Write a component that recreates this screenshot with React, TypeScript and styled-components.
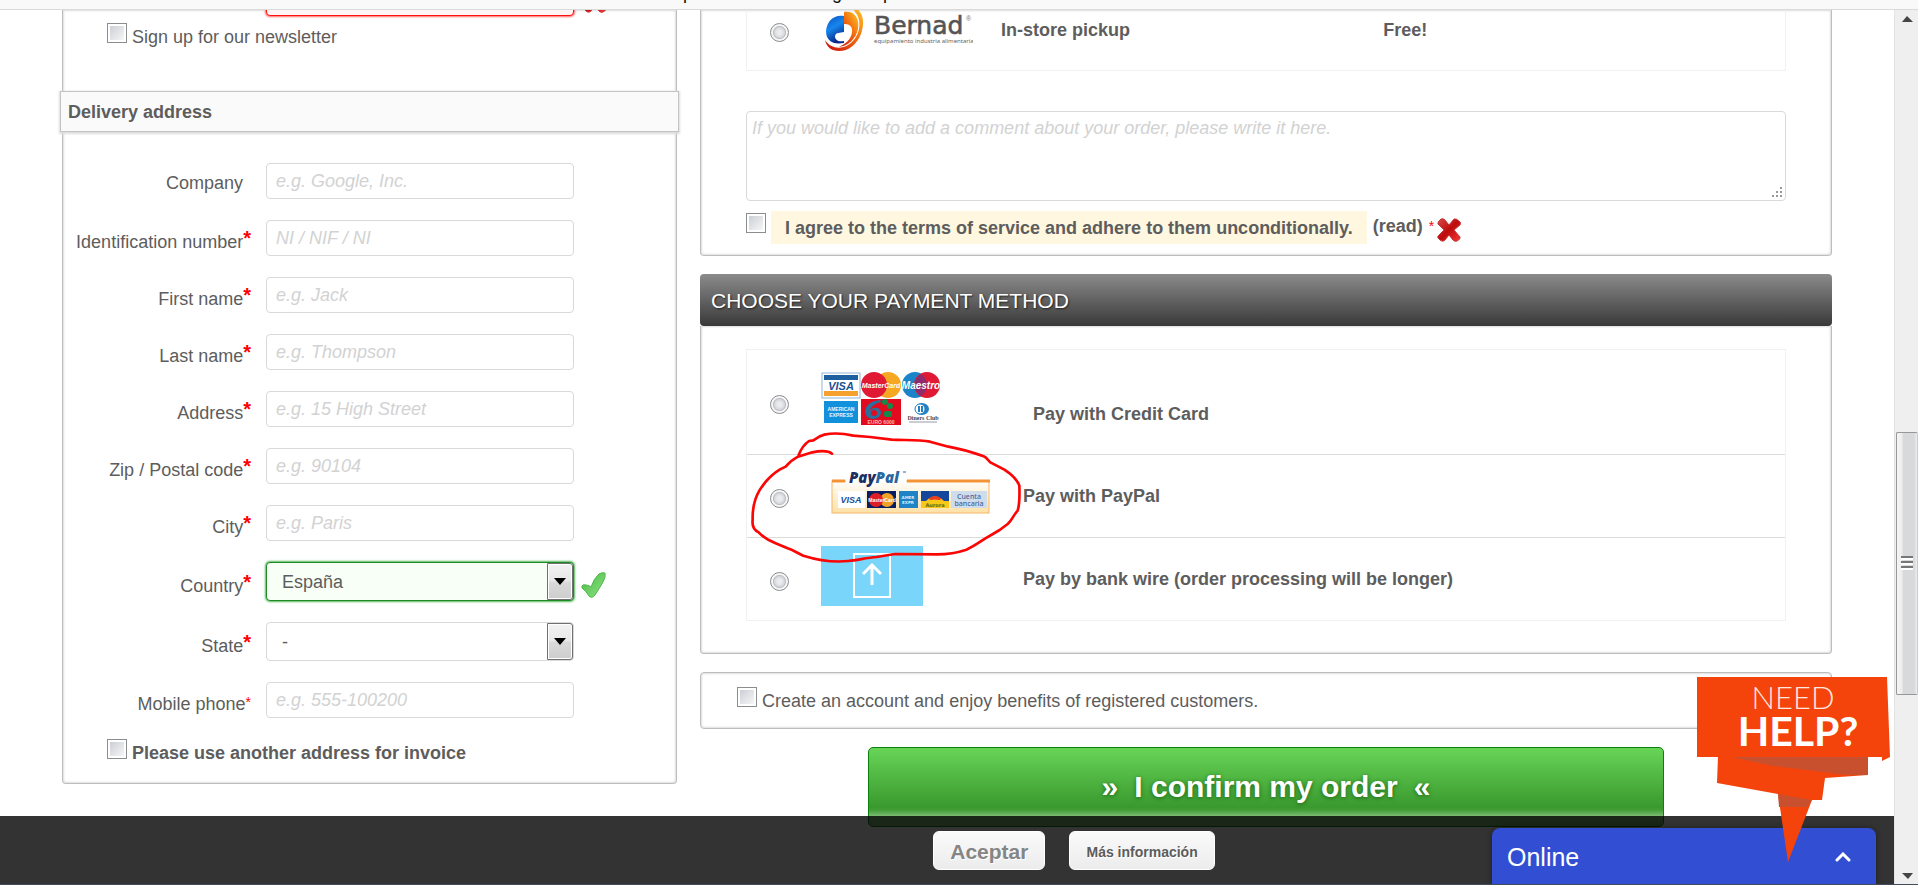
import React, { useState } from "react";
import styled, { createGlobalStyle, css } from "styled-components";

const GlobalStyle = createGlobalStyle`
  *, *::before, *::after { box-sizing: border-box; }
  html, body { margin: 0; padding: 0; }
  body {
    font-family: "Liberation Sans", Arial, sans-serif;
    font-size: 18px;
    line-height: 20px;
    color: #5d5d5d;
    background: #fff;
  }
  button, input, select, textarea { font: inherit; color: inherit; margin: 0; }
`;

const Shell = styled.div`
  height: 100vh;
  display: flex;
  flex-direction: column;
  overflow: hidden;
`;

const TopBar = styled.header`
  flex: 0 0 10px;
  overflow: hidden;
  display: flex;
  background: #f9f9f9;
  border-bottom: 1px solid #dadada;
  color: #111;
  line-height: 10px;
  padding-left: 683px;
`;

const Clipped = styled.span<{ $width: number }>`
  flex: 0 0 ${(p) => p.$width}px;
  margin-top: -12px;
`;

const Viewport = styled.div`
  flex: 1;
  min-height: 0;
  display: flex;
  overflow: hidden;
`;

const Page = styled.div`
  flex: 1;
  min-width: 0;
  position: relative;
  overflow: hidden;
`;

const Columns = styled.main`
  display: grid;
  grid-template-columns: 615fr 1132fr;
  column-gap: 23px;
  padding: 0 62px;
  align-items: start;
`;

const panelFrame = css`
  border: 1px solid #bdbdbd;
  border-radius: 4px;
  box-shadow: inset 0 0 2px 1px #dedede;
  background: #fff;
`;

const AddressPanel = styled.section`
  ${panelFrame}
  border-top: 0;
  border-top-left-radius: 0;
  border-top-right-radius: 0;
  padding-bottom: 20px;
`;

const SubHeader = styled.h2`
  margin: 44px -3px 31px;
  height: 41px;
  display: flex;
  align-items: center;
  padding: 0 7px;
  font-size: 18px;
  background: #fafafa;
  border: 1px solid #c4c4c4;
  box-shadow: 0 1px 2px 1px #dcdcdc;
`;

const FieldRow = styled.div`
  display: grid;
  grid-template-columns: 188px 308px auto;
  column-gap: 15px;
  align-items: center;
  margin-bottom: 21px;
`;

const LabelCell = styled.label<{ $required?: boolean }>`
  display: flex;
  justify-content: flex-end;
  white-space: nowrap;
  padding-top: ${(p) => (p.$required ? 8 : 4)}px;
  padding-right: ${(p) => (p.$required ? 0 : 8)}px;
`;

const Star = styled.span<{ $small?: boolean }>`
  color: #f00;
  font-weight: ${(p) => (p.$small ? "normal" : "bold")};
  font-size: ${(p) => (p.$small ? 14 : 20)}px;
  line-height: ${(p) => (p.$small ? 16 : 12)}px;
`;

const inputFrame = css`
  border: 1px solid #d9d9d9;
  border-radius: 4px;
  background: #fff;
  &::placeholder { color: #d2d2d2; font-style: italic; opacity: 1; }
`;

const TextInput = styled.input<{ $state?: "error" }>`
  ${inputFrame}
  width: 308px;
  height: 36px;
  padding: 0 9px;
  ${(p) => p.$state === "error" && css`
    border: 1px solid #f11;
    background: #fff5f5;
    box-shadow: 0 0 2px 1px #f66;
  `}
`;

const SelectWrap = styled.span`
  position: relative;
  display: block;
  height: 39px;
`;

const SelectInput = styled.select<{ $valid?: boolean }>`
  ${inputFrame}
  appearance: none;
  width: 100%;
  height: 100%;
  padding: 0 40px 0 15px;
  ${(p) => p.$valid && css`
    border-color: #1f8a25;
    background: #f7fff7;
    box-shadow: 0 0 2px 1px #58b75c;
  `}
`;

const SelectArrow = styled.span`
  position: absolute;
  top: 1px;
  right: 1px;
  bottom: 1px;
  width: 26px;
  display: flex;
  align-items: center;
  justify-content: center;
  pointer-events: none;
  border: 1px solid #707070;
  border-radius: 0 3px 3px 0;
  box-shadow: inset 0 0 0 1px #fff;
  background: linear-gradient(#f2f2f2, #e8e8e8 48%, #dadada 52%, #cdcdcd);
`;

const Checkbox = styled.input.attrs({ type: "checkbox" })`
  appearance: none;
  flex: none;
  width: 20px;
  height: 20px;
  border: 1px solid #8c8d8d;
  background: linear-gradient(135deg, #cbcfd5, #f6f6f6) content-box #f4f4f4;
  padding: 2px;
`;

const Radio = styled.input.attrs({ type: "radio" })`
  appearance: none;
  flex: none;
  width: 19px;
  height: 19px;
  border: 1px solid #8a8b8c;
  border-radius: 50%;
  background: radial-gradient(circle, #ececee 0 2px, #d6d8dc 5px, #b9bdc3 6px, #f6f6f6 7px);
`;

const CheckRow = styled.div<{ $top: number; $left: number; $bold?: boolean }>`
  display: flex;
  align-items: flex-start;
  gap: 5px;
  padding: ${(p) => p.$top}px 0 0 ${(p) => p.$left}px;
  font-weight: ${(p) => (p.$bold ? "bold" : "normal")};
  label { padding-top: 4px; }
`;

const ErrorRow = styled.div`
  display: flex;
  gap: 9px;
  margin-top: -30px;
  padding-left: 203px;
  align-items: flex-end;
  svg { margin-bottom: 3px; }
`;

const OrderColumn = styled.div`
  display: flex;
  flex-direction: column;
`;

const Panel = styled.section<{ $openTop?: boolean }>`
  ${panelFrame}
  padding: 0 45px;
  ${(p) => p.$openTop && css`
    border-top: 0;
    border-top-left-radius: 0;
    border-top-right-radius: 0;
  `}
`;

const ShippingPanel = styled(Panel)`padding-bottom: 11px;`;

const PaymentPanel = styled(Panel)`padding-top: 23px; padding-bottom: 32px;`;

const AccountPanel = styled(Panel)`
  margin-top: 18px;
  padding: 0 36px;
  height: 57px;
`;

const OptionList = styled.div`
  position: relative;
  border: 1px solid #f1f1f1;
`;

const ShippingList = styled(OptionList)`
  margin-top: -20px;
  border-top: 0;
`;

const Option = styled.div<{ $height: number }>`
  display: grid;
  grid-template-columns: 19px minmax(0, 1fr);
  column-gap: 32px;
  align-items: center;
  height: ${(p) => p.$height}px;
  padding-left: 23px;
  font-weight: bold;
  & + & { border-top: 1px solid #dcdcdc; }
  input { margin-top: 4px; }
`;

const OptionLabel = styled.label<{ $logo: number }>`
  display: grid;
  grid-template-columns: ${(p) => p.$logo}px minmax(0, 39fr) minmax(0, 41fr);
  align-items: center;
  svg { display: block; }
`;

const PaymentLabel = styled(OptionLabel)`
  grid-template-columns: ${(p) => p.$logo}px minmax(0, 1fr);
  svg { margin-bottom: 6px; }
`;

const OffsetText = styled.span`
  padding: 24px 0 0 10px;
`;

const Comment = styled.textarea`
  ${inputFrame}
  display: block;
  width: 100%;
  height: 90px;
  padding: 6px 5px;
  resize: none;
`;

const CommentWrap = styled.div`
  position: relative;
  margin-top: 40px;
  svg { position: absolute; right: 3px; bottom: 3px; }
`;

const TermsRow = styled.div`
  display: flex;
  align-items: flex-start;
  margin-top: 10px;
  font-weight: bold;
  input { margin: 2px 5px 0 0; }
`;

const TermsLabel = styled.label`
  background: #fff7e0;
  padding: 7px 14px 6px;
  margin-right: 6px;
`;

const ReadLink = styled.a`
  color: inherit;
  text-decoration: none;
  padding: 5px 6px 0 0;
`;

const TermsMark = styled.span`
  display: flex;
  align-items: flex-start;
  gap: 3px;
  padding-top: 7px;
  font-weight: normal;
`;

const SectionTitle = styled.h2`
  margin: 18px 0 0;
  height: 52px;
  padding: 2px 11px 0;
  display: flex;
  align-items: center;
  font-size: 21px;
  font-weight: normal;
  color: #fff;
  text-shadow: 1px 1px 2px #222;
  border-radius: 4px;
  background: linear-gradient(#8b8b8b, #393939);
`;

const Annotation = styled.svg`
  position: absolute;
  top: 0;
  left: 0;
  pointer-events: none;
`;

const ConfirmButton = styled.button`
  height: 80px;
  margin: 18px 168px 0;
  display: flex;
  align-items: center;
  justify-content: center;
  gap: 16px;
  border: 1px solid #0a800d;
  border-radius: 5px;
  color: #fff;
  font-size: 30px;
  font-weight: bold;
  text-shadow: 0 1px 4px #1d6417;
  background: linear-gradient(#67d457, #3a992e 76%, #459f3a 80%, #83bd7b 88%);
`;

const CookieBar = styled.div`
  position: absolute;
  left: 0;
  right: 0;
  bottom: 0;
  height: 68px;
  display: flex;
  justify-content: center;
  align-items: flex-start;
  gap: 24px;
  padding: 15px 0 0 254px;
  background: rgba(0, 0, 0, 0.8);
`;

const CookieButton = styled.button<{ $large?: boolean }>`
  height: 39px;
  padding: 2px 16px 0;
  border: 1px solid #fff;
  border-radius: 6px;
  font-weight: bold;
  font-size: ${(p) => (p.$large ? 21 : 14)}px;
  color: ${(p) => (p.$large ? "#858585" : "#5c5c5c")};
  text-shadow: 1px 1px 0 #fff;
  background: linear-gradient(#fafafa, #ececec);
`;

const ChatTab = styled.button`
  position: absolute;
  right: 18px;
  bottom: 0;
  width: 384px;
  height: 56px;
  display: flex;
  align-items: center;
  justify-content: space-between;
  padding: 2px 25px 0 15px;
  border: 0;
  border-radius: 8px 8px 0 0;
  font-size: 25px;
  color: #fff;
  background: #324fd3;
  box-shadow: 0 0 6px rgba(0, 0, 0, 0.4);
`;

const HelpLink = styled.a`
  position: absolute;
  right: 3px;
  bottom: 21px;
  svg { display: block; }
`;

const ScrollTrack = styled.div`
  flex: 0 0 24px;
  display: grid;
  grid-template-rows: 17px 405fr 263fr 172fr 17px;
  justify-items: center;
  align-items: center;
  padding-left: 1px;
  border-left: 1px solid #e3e3e3;
  background: #efefef;
`;

const ScrollThumb = styled.div`
  grid-row: 3;
  width: 100%;
  height: 100%;
  display: flex;
  align-items: center;
  justify-content: center;
  border: 1px solid #979797;
  border-right-color: #ccc;
  border-radius: 2px;
  background: linear-gradient(90deg, #f6f6f6, #ececec 25%, #d8d9db 32%, #d8d9db 85%, #eee);
`;

const ScrollArrow = styled.svg<{ $row: number; $flip?: boolean }>`
  grid-row: ${(p) => p.$row};
  ${(p) => p.$flip && "transform: rotate(180deg);"}
`;

const Taskbar = styled.footer`
  flex: 0 0 1px;
  background: #424c5c;
`;

const CrossIcon = () => (
  <svg width="24" height="24" viewBox="0 0 24 24" aria-hidden="true">
    <defs>
      <linearGradient id="cross" x1="0" y1="0" x2="1" y2="1">
        <stop offset="0" stopColor="#d84a4a" />
        <stop offset="0.5" stopColor="#bd0c0c" />
        <stop offset="1" stopColor="#f53a3a" />
      </linearGradient>
    </defs>
    <path
      d="M4 1 Q6 0 8 2 L12 7 L17 1 Q19 0 23 4 Q24 5 23 7 L17 12 L23 19 Q24 21 20 23 Q18 24 16 22 L12 17 L8 22 Q5 25 1 20 Q0 19 2 17 L7 12 L1 6 Q0 4 4 1Z"
      fill="url(#cross)"
      stroke="#c93434"
      strokeWidth="1"
    />
  </svg>
);

const TickIcon = () => (
  <svg width="25" height="26" viewBox="0 0 25 26" aria-hidden="true">
    <defs>
      <linearGradient id="tick" x1="0" y1="0" x2="1" y2="1">
        <stop offset="0" stopColor="#4bb548" />
        <stop offset="1" stopColor="#8ee681" />
      </linearGradient>
    </defs>
    <path
      d="M1 14 Q2 12 5 13 Q8 13 10 15 Q13 6 18 2 Q21 0 24 1 Q25 5 22 10 Q18 17 14 23 Q11 27 8 24 Q5 19 1 16Z"
      fill="url(#tick)"
      stroke="#4cba49"
      strokeWidth="1"
    />
  </svg>
);

const BernadLogo = () => (
  <svg width="152" height="60" viewBox="0 0 152 60" fontWeight="400" aria-hidden="true">
    <defs>
      <linearGradient id="flame" x1="1" y1="0" x2="0" y2="1">
        <stop offset="0" stopColor="#ffc928" />
        <stop offset="0.45" stopColor="#f26a0d" />
        <stop offset="1" stopColor="#c80b12" />
      </linearGradient>
      <linearGradient id="wave" x1="0" y1="0" x2="0.4" y2="1">
        <stop offset="0" stopColor="#0c4dc0" />
        <stop offset="0.5" stopColor="#1687ee" />
        <stop offset="1" stopColor="#0a2688" />
      </linearGradient>
    </defs>
    <path d="M23 16 C13 14 6 21 5 31 C5 41 12 45 23 43 L23 41 C17 42 14 40 14 36 C15 32 19 33 23 32Z" fill="url(#wave)" />
    <path d="M23 12 C33 10 39 18 37 29 C35 39 27 46 18 47 C27 43 32 36 31 29 C30 25 27 24 23 24Z" fill="url(#flame)" />
    <path d="M31 6 C43 11 44 22 40 34 C35 47 23 54 12 50 C7 48 5 44 4 40 C9 48 19 50 27 45 C39 38 42 20 34 12Z" fill="url(#flame)" />
    <text x="53" y="34" fontFamily="DejaVu Sans, sans-serif" fontSize="25" fill="#555" stroke="#555" strokeWidth="0.6">Bernad</text>
    <text x="145" y="21" fontFamily="Liberation Sans, sans-serif" fontSize="7" fill="#777">®</text>
    <text x="53" y="43" fontFamily="Noto Sans, sans-serif" fontSize="6" fill="#666">equipamiento industria alimentaria</text>
  </svg>
);

const CardsLogo = () => (
  <svg width="120" height="54" viewBox="0 0 120 54" fontFamily="Liberation Sans, sans-serif" fontWeight="bold" fontStyle="italic" textAnchor="middle" aria-hidden="true">
    <rect x="1" y="1" width="38" height="25" fill="#fff" stroke="#8fb3d6" />
    <rect x="3" y="3" width="34" height="5" fill="#1d5f9f" />
    <rect x="3" y="19" width="34" height="5" fill="#f6a02d" />
    <text x="20" y="18" fontSize="11" fill="#1b4f93">VISA</text>
    <circle cx="67" cy="13" r="13" fill="#f7a823" />
    <circle cx="53" cy="13" r="13" fill="#e01a35" />
    <text x="60" y="16" fontSize="7" fill="#fff">MasterCard</text>
    <circle cx="94" cy="13" r="13" fill="#1b84c9" />
    <circle cx="106" cy="13" r="13" fill="#e01a35" />
    <path d="M100 2 a13 13 0 0 1 0 22 a13 13 0 0 1 0 -22" fill="#8c2c6c" />
    <text x="100" y="17" fontSize="10" fill="#fff">Maestro</text>
    <rect x="3" y="29" width="34" height="22" fill="#1190dc" />
    <text x="20" y="39" fontSize="5" fill="#e8f6ff" fontStyle="normal">AMERICAN</text>
    <text x="20" y="45" fontSize="5" fill="#e8f6ff" fontStyle="normal">EXPRESS</text>
    <rect x="40" y="27" width="40" height="26" fill="#e10a1f" />
    <path d="M59 28 C48 29 42 36 45 43 C48 49 59 48 60 41 C60 35 52 34 49 39 C50 34 53 32 60 30Z" fill="#2b6f9d" />
    <circle cx="53" cy="41" r="3" fill="#e10a1f" />
    <circle cx="64" cy="30" r="3" fill="#128a4a" />
    <circle cx="69" cy="34" r="3" fill="#128a4a" />
    <rect x="63" y="39" width="8" height="6" rx="2" fill="#128a4a" />
    <text x="60" y="52" fontSize="5" fill="#ffb8a8" fontStyle="normal">EURO 6000</text>
    <ellipse cx="101" cy="37" rx="7" ry="6" fill="#2380c3" />
    <circle cx="99" cy="37" r="5" fill="#fff" stroke="#2380c3" />
    <path d="M98 34v6M101 34v6" stroke="#2380c3" strokeWidth="2" />
    <text x="102" y="48" fontSize="6" fill="#445" fontFamily="Liberation Serif, serif" fontStyle="normal">Diners Club</text>
    <path d="M88 50h28" stroke="#99a" />
  </svg>
);

const PayPalLogo = () => (
  <svg width="170" height="48" viewBox="0 0 170 48" fontFamily="DejaVu Sans, sans-serif" fontWeight="bold" textAnchor="middle" aria-hidden="true">
    <defs>
      <linearGradient id="cream" x1="0" y1="0" x2="0" y2="1">
        <stop offset="0" stopColor="#fffefb" />
        <stop offset="1" stopColor="#fde0a6" />
      </linearGradient>
    </defs>
    <rect x="11" y="12" width="157" height="32" fill="url(#cream)" stroke="#f3b868" />
    <path d="M11 12h13M86 12h83" stroke="#f39335" strokeWidth="3" />
    <rect x="25" y="9" width="60" height="5" fill="#fff" />
    <text x="28" y="14" fontSize="15" fontFamily="Open Sans, sans-serif" fontStyle="italic" fontWeight="800" fill="#1c2f60" textAnchor="start">
      Pay<tspan fill="#2b679f">Pal</tspan>
    </text>
    <path d="M82 3h3" stroke="#2b679f" />
    <rect x="17" y="22" width="27" height="17" fill="#fff" />
    <text x="30" y="34" fontSize="9" fontStyle="italic" fill="#17509b" fontFamily="Liberation Sans, sans-serif">VISA</text>
    <rect x="46" y="22" width="29" height="17" fill="#0b1e62" />
    <circle cx="66" cy="31" r="7" fill="#f3a428" />
    <circle cx="55" cy="31" r="7" fill="#df1f26" />
    <text x="61" y="33" fontSize="5" fill="#fff" fontFamily="Liberation Sans, sans-serif">MasterCard</text>
    <rect x="78" y="22" width="19" height="17" fill="#1f83c6" />
    <text x="87" y="30" fontSize="4" fill="#d6efff">AMER</text>
    <text x="87" y="35" fontSize="4" fill="#d6efff">EXPR</text>
    <rect x="100" y="22" width="28" height="17" fill="#f8c818" />
    <path d="M100 22h28v10h-5q-9-9-18 0h-5z" fill="#14479b" />
    <path d="M100 33q14-5 28 0l-8-2q-6-5-12 0z" fill="#de3425" />
    <path d="M107 30q7-6 14 0z" fill="#ee3a20" />
    <text x="114" y="38" fontSize="5" fill="#65631c">Aurora</text>
    <rect x="130" y="22" width="36" height="17" fill="#cfdcec" />
    <text x="148" y="30" fontSize="7" fontWeight="500" fill="#44659a" fontFamily="Noto Sans, sans-serif">Cuenta</text>
    <text x="148" y="37" fontSize="7" fontWeight="500" fill="#44659a" fontFamily="Noto Sans, sans-serif">bancaria</text>
  </svg>
);

const BankWireLogo = () => (
  <svg width="102" height="60" viewBox="0 0 102 60" aria-hidden="true">
    <rect width="102" height="60" fill="#7ad5fa" />
    <rect x="33" y="8" width="36" height="43" fill="none" stroke="#fff" strokeWidth="2" />
    <path d="M51 39V20M42 28L51 19L60 28" fill="none" stroke="#fff" strokeWidth="3" />
  </svg>
);

const HelpBadge = () => (
  <svg width="194" height="186" viewBox="0 0 194 186" aria-hidden="true">
    <path d="M0 0H190L193 80L185 84V80H0Z" fill="#f5430c" />
    <path d="M21 79H171V98L128 101L125 123H115L91 185L81 117L20 106Z" fill="#f5430c" />
    <path d="M34 80H171V98L150 98L76 89Z" fill="#c9502e" />
    <path d="M81 117L115 123L110 130H82Z" fill="#c9502e" />
    <text x="96" y="32" textAnchor="middle" fontFamily="Lato, sans-serif" fontWeight="300" fontSize="31" fill="#ffe7df">NEED</text>
    <text x="101" y="69" textAnchor="middle" fontFamily="Lato, sans-serif" fontWeight="bold" fontSize="41" fill="#fff">HELP?</text>
  </svg>
);

type Field = {
  id: string;
  label: string;
  placeholder?: string;
  star?: "bold" | "small";
  options?: string[];
  valid?: boolean;
};

const fields: Field[] = [
  { id: "company", label: "Company", placeholder: "e.g. Google, Inc." },
  { id: "dni", label: "Identification number", placeholder: "NI / NIF / NI", star: "bold" },
  { id: "firstname", label: "First name", placeholder: "e.g. Jack", star: "bold" },
  { id: "lastname", label: "Last name", placeholder: "e.g. Thompson", star: "bold" },
  { id: "address", label: "Address", placeholder: "e.g. 15 High Street", star: "bold" },
  { id: "postcode", label: "Zip / Postal code", placeholder: "e.g. 90104", star: "bold" },
  { id: "city", label: "City", placeholder: "e.g. Paris", star: "bold" },
  { id: "country", label: "Country", options: ["España"], star: "bold", valid: true },
  { id: "state", label: "State", options: ["-"], star: "bold" },
  { id: "phone", label: "Mobile phone", placeholder: "e.g. 555-100200", star: "small" },
];

const Tick = styled.span`
  margin-left: -8px;
  padding-top: 6px;
  height: 32px;
`;

const AddressField = ({ field }: { field: Field }) => (
  <FieldRow>
    <LabelCell htmlFor={field.id} $required={!!field.star}>
      {field.label}
      {field.star && <Star $small={field.star === "small"}>*</Star>}
    </LabelCell>
    {field.options ? (
      <SelectWrap>
        <SelectInput id={field.id} $valid={field.valid}>
          {field.options.map((o) => <option key={o}>{o}</option>)}
        </SelectInput>
        <SelectArrow>
          <svg width="12" height="7" viewBox="0 0 12 7" aria-hidden="true"><path d="M0 0H12L6 7Z" fill="#000" /></svg>
        </SelectArrow>
      </SelectWrap>
    ) : (
      <TextInput id={field.id} type="text" placeholder={field.placeholder} />
    )}
    {field.valid && <Tick><TickIcon /></Tick>}
  </FieldRow>
);

const payments = [
  { id: "card", text: "Pay with Credit Card", logo: <CardsLogo />, height: 104, offset: true },
  { id: "paypal", text: "Pay with PayPal", logo: <PayPalLogo />, height: 83 },
  { id: "wire", text: "Pay by bank wire (order processing will be longer)", logo: <BankWireLogo />, height: 83 },
];

export default function App() {
  const [comment, setComment] = useState("");
  return (
    <Shell>
      <GlobalStyle />
      <TopBar>
        <Clipped $width={149}>p</Clipped>
        <Clipped $width={51}>g</Clipped>
        <Clipped $width={20}>p</Clipped>
      </TopBar>
      <Viewport>
        <Page>
          <Columns>
            <AddressPanel>
              <ErrorRow>
                <TextInput type="email" aria-label="Email" $state="error" />
                <CrossIcon />
              </ErrorRow>
              <CheckRow $top={7} $left={44}>
                <Checkbox id="newsletter" />
                <label htmlFor="newsletter">Sign up for our newsletter</label>
              </CheckRow>
              <SubHeader>Delivery address</SubHeader>
              {fields.map((f) => <AddressField key={f.id} field={f} />)}
              <CheckRow $top={0} $left={44} $bold>
                <Checkbox id="invoice" />
                <label htmlFor="invoice">Please use another address for invoice</label>
              </CheckRow>
            </AddressPanel>

            <OrderColumn>
              <ShippingPanel $openTop>
                <ShippingList>
                  <Option $height={80}>
                    <Radio name="carrier" id="pickup" />
                    <OptionLabel htmlFor="pickup" $logo={180}>
                      <BernadLogo />
                      <span>In-store pickup</span>
                      <span>Free!</span>
                    </OptionLabel>
                  </Option>
                </ShippingList>
                <CommentWrap>
                  <Comment
                    aria-label="Order comment"
                    value={comment}
                    onChange={(e) => setComment(e.target.value)}
                    placeholder="If you would like to add a comment about your order, please write it here."
                  />
                  <svg width="11" height="11" viewBox="0 0 11 11" aria-hidden="true">
                    <path d="M8 0h2v2h-2zM8 4h2v2h-2zM4 4h2v2h-2zM8 8h2v2h-2zM4 8h2v2h-2zM0 8h2v2h-2z" fill="#999" />
                  </svg>
                </CommentWrap>
                <TermsRow>
                  <Checkbox id="terms" />
                  <TermsLabel htmlFor="terms">I agree to the terms of service and adhere to them unconditionally.</TermsLabel>
                  <ReadLink href="#terms">(read)</ReadLink>
                  <TermsMark><Star $small>*</Star><CrossIcon /></TermsMark>
                </TermsRow>
              </ShippingPanel>

              <SectionTitle>CHOOSE YOUR PAYMENT METHOD</SectionTitle>
              <PaymentPanel $openTop>
                <OptionList>
                  {payments.map((p) => (
                    <Option key={p.id} $height={p.height}>
                      <Radio name="payment" id={p.id} />
                      <PaymentLabel htmlFor={p.id} $logo={202}>
                        {p.logo}
                        {p.offset ? <OffsetText>{p.text}</OffsetText> : <span>{p.text}</span>}
                      </PaymentLabel>
                    </Option>
                  ))}
                  <Annotation width="290" height="240" viewBox="21 28 870 720" aria-hidden="true">
                    <path
                      d="M276 339C266 331 242 330 217 335L174 348C160 355 150 363 137 378L120 386C95 401 75 422 58 450C43 476 37 506 38 538C36 553 42 568 56 575C70 590 85 599 105 607L141 622C160 628 174 638 190 645C235 659 285 665 325 661C355 658 380 651 410 649L465 640L590 641C620 641 650 637 679 627C700 618 720 604 735 594L779 568L803 550C818 536 820 523 833 510C839 490 839 460 838 435C831 415 813 400 793 387L751 365C744 360 742 351 731 347C700 336 665 325 625 318L570 303C535 297 495 299 455 297L390 289L340 285C310 278 280 276 253 282C241 285 232 290 220 299L207 301C191 312 183 325 176 343"
                      fill="none"
                      stroke="#fb0505"
                      strokeWidth="8"
                      strokeLinecap="round"
                      strokeLinejoin="round"
                    />
                  </Annotation>
                </OptionList>
              </PaymentPanel>

              <AccountPanel>
                <CheckRow $top={14} $left={0}>
                  <Checkbox id="account" />
                  <label htmlFor="account">Create an account and enjoy benefits of registered customers.</label>
                </CheckRow>
              </AccountPanel>
              <ConfirmButton type="button">
                <span>»</span><span>I confirm my order</span><span>«</span>
              </ConfirmButton>
            </OrderColumn>
          </Columns>

          <CookieBar>
            <CookieButton type="button" $large>Aceptar</CookieButton>
            <CookieButton type="button">Más información</CookieButton>
          </CookieBar>
          <ChatTab type="button">
            <span>Online</span>
            <svg width="16" height="10" viewBox="0 0 16 10" aria-hidden="true">
              <path d="M2 8L8 2L14 8" fill="none" stroke="#fff" strokeWidth="3" strokeLinecap="round" />
            </svg>
          </ChatTab>
          <HelpLink href="#help" aria-label="Need help?"><HelpBadge /></HelpLink>
        </Page>
        <ScrollTrack>
          <ScrollArrow $row={1} width="11" height="6" viewBox="0 0 11 6"><path d="M0 6L5 0L11 6Z" fill="#444" /></ScrollArrow>
          <ScrollThumb>
            <svg width="12" height="15" viewBox="0 0 12 15" aria-hidden="true">
              <path d="M0 1h12M0 6h12M0 11h12" stroke="#777" strokeWidth="2" />
              <path d="M0 3h12M0 8h12M0 13h12" stroke="#fff" strokeWidth="2" />
            </svg>
          </ScrollThumb>
          <ScrollArrow $row={5} $flip width="11" height="6" viewBox="0 0 11 6"><path d="M0 6L5 0L11 6Z" fill="#444" /></ScrollArrow>
        </ScrollTrack>
      </Viewport>
      <Taskbar />
    </Shell>
  );
}
